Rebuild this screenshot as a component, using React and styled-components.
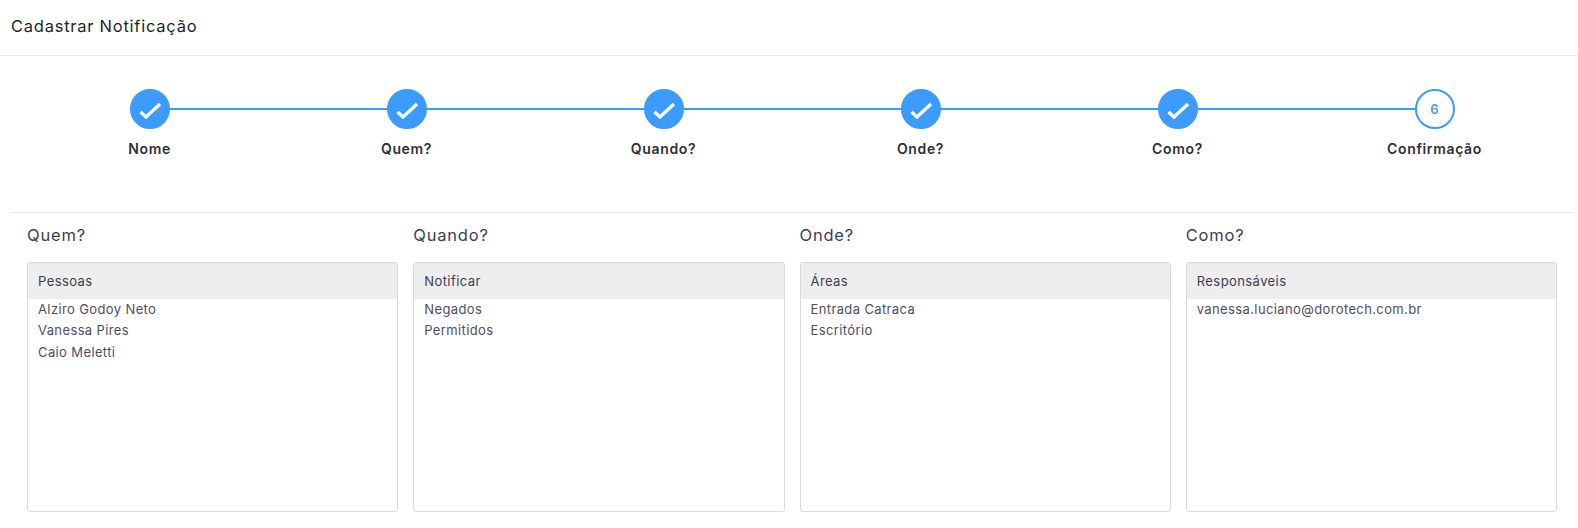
import React from "react";
import styled, { createGlobalStyle } from "styled-components";

const FONT = '"Inter", "Noto Sans", "Liberation Sans", sans-serif';

const steps = ["Nome", "Quem?", "Quando?", "Onde?", "Como?", "Confirmação"];

const summary = [
  { title: "Quem?", header: "Pessoas", items: ["Alziro Godoy Neto", "Vanessa Pires", "Caio Meletti"] },
  { title: "Quando?", header: "Notificar", items: ["Negados", "Permitidos"] },
  { title: "Onde?", header: "Áreas", items: ["Entrada Catraca", "Escritório"] },
  { title: "Como?", header: "Responsáveis", items: ["vanessa.luciano@dorotech.com.br"] },
];

const GlobalStyle = createGlobalStyle`
  html, body {
    margin: 0;
    padding: 0;
    background: #ffffff;
    font-family: ${FONT};
  }
  * {
    box-sizing: border-box;
  }
`;

const Page = styled.div`
  width: 1578px;
  height: 528px;
  overflow: hidden;
`;

const Header = styled.header`
  height: 56px;
  padding: 0 11px;
  display: flex;
  align-items: center;
  border-bottom: 1px solid #ebebeb;
`;

const Title = styled.h1`
  margin: 0 0 4px;
  font-size: 16.5px;
  font-weight: 400;
  letter-spacing: 0.75px;
  color: #1f1f2b;
`;

const Body = styled.div`
  padding: 0 5px 0 11px;
`;

const Stepper = styled.ol`
  list-style: none;
  margin: 0;
  padding: 33px 10px 0;
  height: 157px;
  display: grid;
  grid-template-columns: repeat(6, 1fr);
  border-bottom: 1px solid #e2e2e2;
`;

const Step = styled.li`
  position: relative;
  display: flex;
  flex-direction: column;
  align-items: center;

  &:not(:last-child)::after {
    content: "";
    position: absolute;
    top: 19px;
    left: 50%;
    width: 100%;
    height: 2px;
    background: #3b9bff;
  }
`;

const Bullet = styled.div`
  position: relative;
  z-index: 1;
  width: 40px;
  height: 40px;
  border-radius: 50%;
  display: flex;
  align-items: center;
  justify-content: center;
  border: 2px solid #3b9bff;
  background: ${(p) => (p.$done ? "#3b9bff" : "#ffffff")};
  color: ${(p) => (p.$done ? "#ffffff" : "#5b96f7")};
  font-size: 13px;
  font-weight: 600;
`;

const StepLabel = styled.span`
  margin-top: 10px;
  font-size: 14px;
  line-height: 20px;
  font-weight: 600;
  letter-spacing: 0.65px;
  color: #2f2f36;
`;

const Columns = styled.div`
  display: grid;
  grid-template-columns: repeat(4, 1fr);
  gap: 15px;
  padding: 0 16px;
`;

const Column = styled.section`
  display: flex;
  flex-direction: column;
`;

const ColumnTitle = styled.h2`
  margin: 0;
  height: 49px;
  padding-top: 11px;
  font-size: 16.5px;
  line-height: 22px;
  font-weight: 400;
  letter-spacing: 0.8px;
  color: #3f3d56;
`;

const Panel = styled.div`
  height: 250px;
  border: 1px solid #d9d9d9;
  border-radius: 3px;
  overflow: hidden;
`;

const PanelHeader = styled.div`
  height: 36px;
  padding: 0 10px;
  display: flex;
  align-items: center;
  background: #eeeeee;
  font-size: 13px;
  letter-spacing: 0.42px;
  color: #3f3d56;
`;

const PanelList = styled.ul`
  list-style: none;
  margin: 0;
  padding: 0 10px;
`;

const PanelItem = styled.li`
  height: 20.6px;
  display: flex;
  align-items: center;
  font-size: 13px;
  letter-spacing: 0.38px;
  color: #4f4d64;

  &:nth-child(3) {
    margin-top: 1.4px;
  }
`;

const CheckIcon = () => (
  <svg width="24" height="24" viewBox="0 0 24 24" fill="none" stroke="currentColor" strokeWidth="3.4">
    <path d="M2.5 15 L8 20 L22 7" />
  </svg>
);

export default function App() {
  return (
    <Page>
      <GlobalStyle />
      <Header>
        <Title>Cadastrar Notificação</Title>
      </Header>
      <Body>
        <Stepper>
          {steps.map((label, i) => {
            const done = i < steps.length - 1;
            return (
              <Step key={label}>
                <Bullet $done={done}>{done ? <CheckIcon /> : i + 1}</Bullet>
                <StepLabel>{label}</StepLabel>
              </Step>
            );
          })}
        </Stepper>
        <Columns>
          {summary.map((col) => (
            <Column key={col.title}>
              <ColumnTitle>{col.title}</ColumnTitle>
              <Panel>
                <PanelHeader>{col.header}</PanelHeader>
                <PanelList>
                  {col.items.map((item) => (
                    <PanelItem key={item}>{item}</PanelItem>
                  ))}
                </PanelList>
              </Panel>
            </Column>
          ))}
        </Columns>
      </Body>
    </Page>
  );
}
